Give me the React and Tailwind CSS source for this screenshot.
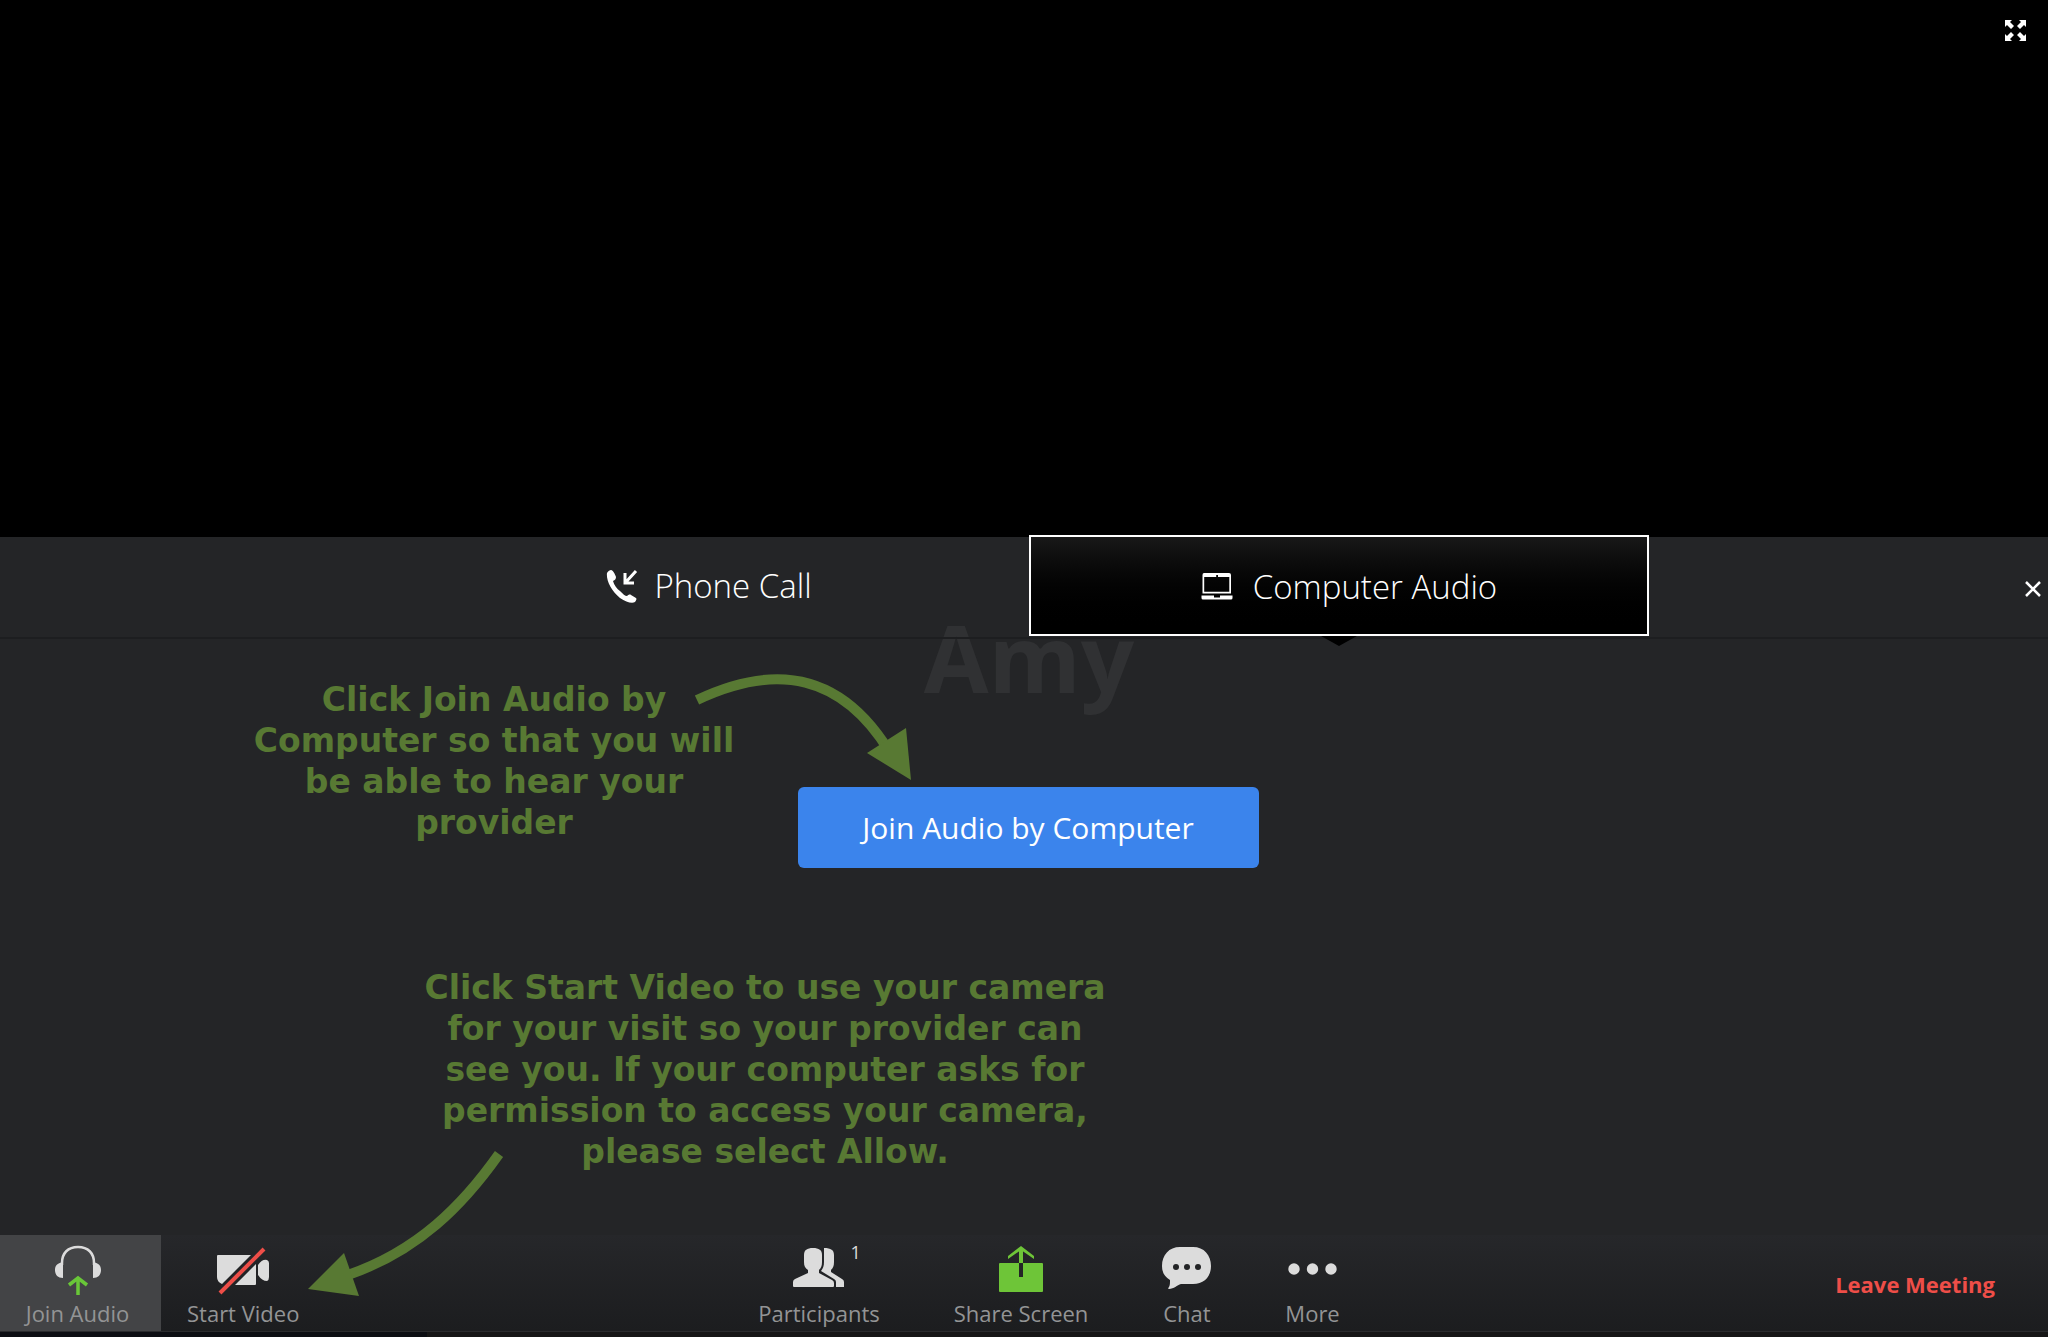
import React from 'react';

function FullscreenIcon() {
  return (
    <svg viewBox="0 0 21 21" className="h-[21px] w-[21px]" fill="#fff" aria-hidden="true">
      {[0, 90, 180, 270].map((deg) => (
        <path key={deg} transform={`rotate(${deg} 10.5 10.5)`} d="M0 0H7L5 2L9 6L6 9L2 5L0 7Z" />
      ))}
    </svg>
  );
}

function PhoneIcon() {
  return (
    <svg viewBox="0 0 32 34" className="h-[34px] w-8" fill="none" aria-hidden="true">
      <path
        fill="#fff"
        d="M1 4C2 2 4 1 5 1C7 1 9 5 10 8C10 10 9 11 7 12C8 16 11 20 14 22C17 25 19 27 21 27C22 26 24 25 25 26L30 29C31 30 30 32 29 33C26 35 20 33 14 29C5 22 0 11 1 4Z"
      />
      <path d="M30 2L20 13M19 4V14H28" stroke="#fff" strokeWidth="3" />
    </svg>
  );
}

function LaptopIcon() {
  return (
    <svg viewBox="0 0 32 27" className="h-[27px] w-8" aria-hidden="true">
      <path
        fill="#fff"
        fillRule="evenodd"
        d="M3 0H28Q30 0 30 2V20.5H1.5V2Q1.5 0 3 0ZM3.2 4V18.8H28.3V4H17V2H15.2V4ZM0.5 22.5H13V24.5H19V22.5H31.5V25Q31.5 26.5 30 26.5H2Q0.5 26.5 0.5 25Z"
      />
    </svg>
  );
}

function HeadphonesIcon() {
  return (
    <svg viewBox="0 0 46 50" className="h-[50px] w-[46px]" fill="none" aria-hidden="true">
      <path d="M7 20V18C7 8 13 2 23 2S39 8 39 18V20" stroke="#dcdcdc" strokeWidth="2.5" />
      <path d="M8 17V33C3 33 0 30 0 25S3 18 8 17ZM38 17V33C43 33 46 30 46 25S43 18 38 17Z" fill="#dcdcdc" />
      <path d="M23 50V33M14 40L23 33L32 40" stroke="#69c738" strokeWidth="3.5" />
    </svg>
  );
}

function VideoOffIcon() {
  return (
    <svg viewBox="0 -2 52 50" className="h-[50px] w-[52px]" fill="none" aria-hidden="true">
      <path d="M1 8H34L5 37Q0 35 0 30V9Q0 8 1 8ZM39 17V37Q39 38 38 38H18Z" fill="#dcdcdc" />
      <path d="M41 18Q45 12 50 13Q52 14 52 16V30Q52 33 50 34Q45 34 41 28Z" fill="#dcdcdc" />
      <path d="M3 46L47 2" stroke="#ee4e48" strokeWidth="4" />
    </svg>
  );
}

function ParticipantsIcon() {
  return (
    <svg viewBox="0 0 51 45" className="h-[45px] w-[51px]" fill="#dcdcdc" aria-hidden="true">
      <path d="M11 7C11 2 14 0 20 0S29 2 29 7V14C29 18 28 20 26 22V25L39 32Q41 33 41 35V38Q41 39 40 39H1Q0 39 0 38V34Q0 32 2 31L15 25V22C12 20 11 18 11 14Z" />
      <path d="M31 0C38 0 41 2 41 7V14C41 18 40 20 38 22V24L49 31Q51 32 51 34V39H43V34Q43 32 41 31L28 23C30 20 31 18 31 14Z" />
    </svg>
  );
}

function ShareIcon() {
  return (
    <svg viewBox="0 0 44 48" className="h-12 w-11" fill="none" aria-hidden="true">
      <rect y="17" width="44" height="29" rx="1" fill="#6ec538" />
      <path d="M22 17V31" stroke="#232426" strokeWidth="4" />
      <path d="M22 17V3" stroke="#6ec538" strokeWidth="4" />
      <path d="M22 0L35 10V13L22 4L9 13V10Z" fill="#6ec538" />
    </svg>
  );
}

function ChatIcon() {
  return (
    <svg viewBox="0 0 49 47" className="h-[47px] w-[49px]" aria-hidden="true">
      <path
        fill="#dcdcdc"
        d="M18 0H31C42 0 49 8 49 19S42 37 31 37H19C15 38 12 42 7 42C6 42 6 41 7 40C8 38 8 36 8 33C3 30 0 26 0 19C0 8 7 0 18 0Z"
      />
      <g fill="#232426">
        <circle cx="14" cy="20" r="3" />
        <circle cx="25" cy="20" r="3" />
        <circle cx="36" cy="20" r="3" />
      </g>
    </svg>
  );
}

function MoreIcon() {
  return (
    <svg viewBox="0 0 49 14" className="h-3.5 w-[49px]" fill="#dcdcdc" aria-hidden="true">
      <circle cx="6" cy="6" r="5.7" />
      <circle cx="24.5" cy="6" r="5.7" />
      <circle cx="43" cy="6" r="5.7" />
    </svg>
  );
}

function ToolButton({ label, icon, badge }) {
  return (
    <button className="flex h-full flex-col items-center pt-2">
      <span className="relative flex h-[54px] items-center justify-center">
        {icon}
        {badge && (
          <span className="absolute top-0 left-full ml-1.5 text-lg leading-[18px] text-[#dcdcdc]">{badge}</span>
        )}
      </span>
      <span className="text-[22px] leading-8 text-[#939495]">{label}</span>
    </button>
  );
}

function Hint({ className, children }) {
  return (
    <p
      className={`absolute text-center font-['DejaVu_Sans','Liberation_Sans',sans-serif] text-[33px] leading-[41px] font-bold text-[#587933] ${className}`}
    >
      {children}
    </p>
  );
}

export default function App() {
  return (
    <div className="flex min-h-screen flex-col bg-[#242527] font-['Open_Sans','Noto_Sans',sans-serif]">
      <section className="flex h-[537px] items-start justify-end bg-black px-[22px] py-5">
        <button aria-label="Enter full screen">
          <FullscreenIcon />
        </button>
      </section>

      <main className="relative flex grow flex-col">
        <h1 className="absolute inset-x-0 top-[57px] pl-2.5 text-center text-[94px] leading-[126px] font-bold text-[#303133]">
          Amy
        </h1>

        <div className="relative flex h-[102px] items-start justify-center border-b-2 border-[#1d1e20] pl-2.5">
          <button className="flex h-[98px] w-[620px] items-center justify-center gap-4 pr-5 text-[33px] font-light text-white">
            <PhoneIcon />
            Phone Call
          </button>
          <button className="relative -mt-0.5 flex h-[101px] w-[620px] items-center justify-center gap-5 border-2 border-white bg-linear-to-b from-[#181818] to-black pt-0.5 pl-5 text-[33px] font-light text-white">
            <LaptopIcon />
            Computer Audio
            <svg viewBox="0 0 36 10" className="absolute inset-x-0 top-full mx-auto mt-0.5 h-2.5 w-9" aria-hidden="true">
              <path d="M0 0H36L18 10Z" fill="#000" />
            </svg>
          </button>
          <button aria-label="Close" className="absolute top-11 right-[7px]">
            <svg viewBox="0 0 16 16" className="h-4 w-4" aria-hidden="true">
              <path d="M1 1L15 15M15 1L1 15" stroke="#fff" strokeWidth="2.5" />
            </svg>
          </button>
        </div>

        <div className="flex justify-center pt-[148px] pl-2">
          <button className="relative h-[81px] w-[461px] rounded-md bg-[#3b84ec] text-[30px] text-white">
            Join Audio by Computer
          </button>
        </div>

        <Hint className="top-[142px] left-[244px] w-[500px]">
          Click Join Audio by
          <br />
          Computer so that you will
          <br />
          be able to hear your
          <br />
          provider
        </Hint>
        <svg viewBox="0 0 220 110" className="absolute top-[134px] left-[692px] h-[110px] w-[220px]" aria-hidden="true">
          <path d="M5 29C85 -9 150 4 197 80" fill="none" stroke="#587933" strokeWidth="10" />
          <path d="M214 57L219 109L175 82Z" fill="#587933" />
        </svg>

        <Hint className="top-[430px] left-[415px] w-[700px]">
          Click Start Video to use your camera
          <br />
          for your visit so your provider can
          <br />
          see you. If your computer asks for
          <br />
          permission to access your camera,
          <br />
          please select Allow.
        </Hint>
        <svg viewBox="0 0 200 150" className="absolute top-[612px] left-[306px] z-10 h-[150px] w-[200px]" aria-hidden="true">
          <path d="M193 5C157 56 112 102 42 126" fill="none" stroke="#587933" strokeWidth="10" />
          <path d="M38 104L2 140L53 147Z" fill="#587933" />
        </svg>
      </main>

      <footer>
        <div className="flex h-24 items-stretch bg-linear-to-b from-[#26272a] to-[#1c1d1f]">
          <div className="flex flex-1 pr-[50px]">
            <div className="flex w-[161px] justify-center bg-[#434446] pr-1.5">
              <ToolButton label="Join Audio" icon={<HeadphonesIcon />} />
            </div>
            <div className="flex pl-[26px]">
              <ToolButton label="Start Video" icon={<VideoOffIcon />} />
            </div>
          </div>
          <nav className="flex gap-[74px]">
            <ToolButton label="Participants" icon={<ParticipantsIcon />} badge="1" />
            <ToolButton label="Share Screen" icon={<ShareIcon />} />
            <ToolButton label="Chat" icon={<ChatIcon />} />
            <ToolButton label="More" icon={<MoreIcon />} />
          </nav>
          <div className="flex flex-1 items-center justify-end">
            <button className="mr-[53px] pt-0.5 text-[22px] font-bold text-[#ee4e48]">Leave Meeting</button>
          </div>
        </div>
        <div className="h-1.5 border-t border-[#2a2b2d] bg-[#161616]">
          <div className="h-full w-[427px] bg-[#0c0e13]" />
        </div>
      </footer>
    </div>
  );
}
